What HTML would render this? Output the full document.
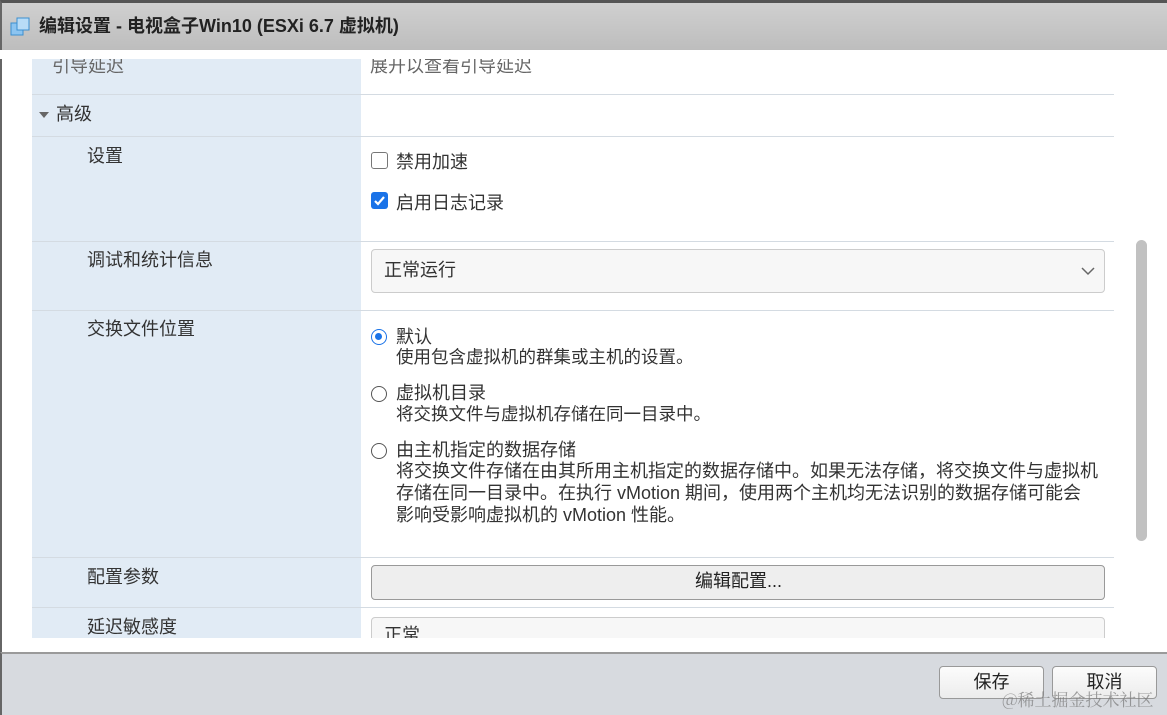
<!DOCTYPE html>
<html><head><meta charset="utf-8"><style>
*{margin:0;padding:0;box-sizing:border-box}
body{width:1167px;height:715px;overflow:hidden;background:#fff;font-family:"Liberation Sans","Noto Sans CJK SC",sans-serif;color:#333;font-size:18px;position:relative}
.abs{position:absolute}
#title{left:0;top:0;width:1167px;height:50px;background:linear-gradient(#d0d0d0,#bdbdbd);border-top:3px solid #555;border-left:2px solid #666}
#title span{position:absolute;left:37px;top:12px;font-weight:bold;font-size:18px;line-height:22px;color:#222}
.lc{left:32px;width:329px;background:#e1ebf5}
.hl{left:32px;width:1082px;height:1px;background:#d4dbe2}
.t{font-size:18px;line-height:22px;color:#333;white-space:nowrap}
.sel{left:371px;width:734px;border:1px solid #ccc;border-radius:4px;background:#f7f7f7}
.rad{width:16px;height:16px;border-radius:50%;border:1.5px solid #555;background:#fff}
.sub{font-size:17.5px;color:#333;line-height:22px;white-space:nowrap}
#foot{left:0;top:652px;width:1167px;height:63px;background:#d7dadf;border-top:2px solid #9a9a9a;border-left:2px solid #666}
.btn{top:666px;width:105px;height:33px;border:1px solid #999;border-radius:4px;background:linear-gradient(#fcfcfc,#ececec);text-align:center;line-height:31px;font-size:18px;color:#222}
</style></head><body>
<div class="abs" style="left:0;top:0;width:2px;height:715px;background:#666"></div>
<div id="title" class="abs">
<svg class="abs" style="left:8px;top:14px" width="22" height="22" viewBox="0 0 22 22"><rect x="1" y="6" width="12" height="12" fill="#8cc4f0" stroke="#3b8fd0"/><rect x="7" y="1" width="12" height="12" fill="#b8dcf7" stroke="#3b8fd0"/></svg>
<span>编辑设置 - 电视盒子Win10 (ESXi 6.7 虚拟机)</span></div>

<div class="abs lc" style="top:50px;height:588px"></div>
<div class="abs t" style="left:52px;top:55px;color:#666">引导延迟</div>
<div class="abs t" style="left:370px;top:55px;color:#666">展开以查看引导延迟</div>
<div class="abs" style="left:0;top:50px;width:1167px;height:9px;background:#fff"></div>
<div class="abs hl" style="top:94px"></div>
<div class="abs" style="left:39px;top:112px;width:0;height:0;border-left:5px solid transparent;border-right:5px solid transparent;border-top:6px solid #666"></div>
<div class="abs t" style="left:56px;top:103px">高级</div>
<div class="abs hl" style="top:136px"></div>
<div class="abs t" style="left:87px;top:145px">设置</div>
<div class="abs" style="left:371px;top:152px;width:17px;height:17px;border:1.5px solid #777;border-radius:3px;background:#fff"></div>
<div class="abs t" style="left:396px;top:151px">禁用加速</div>
<div class="abs" style="left:371px;top:192px;width:17px;height:17px;border-radius:3px;background:#1a73e8"><svg width="17" height="17"><path d="M4 9l3 3 6-7" stroke="#fff" stroke-width="2.2" fill="none"/></svg></div>
<div class="abs t" style="left:396px;top:192px">启用日志记录</div>
<div class="abs hl" style="top:241px"></div>
<div class="abs t" style="left:87px;top:249px">调试和统计信息</div>
<div class="abs sel" style="top:249px;height:44px"></div>
<div class="abs t" style="left:384px;top:259px">正常运行</div>
<svg class="abs" style="left:1081px;top:266px" width="14" height="10"><path d="M1 2l6 6 6-6" stroke="#666" stroke-width="1.5" fill="none"/></svg>
<div class="abs hl" style="top:310px"></div>
<div class="abs t" style="left:87px;top:318px">交换文件位置</div>
<div class="abs rad" style="left:371px;top:329px;border:1.5px solid #1a73e8"><div style="margin:3px;width:7px;height:7px;border-radius:50%;background:#1a73e8"></div></div>
<div class="abs t" style="left:396px;top:326px">默认</div>
<div class="abs sub" style="left:396px;top:346px">使用包含虚拟机的群集或主机的设置。</div>
<div class="abs rad" style="left:371px;top:386px"></div>
<div class="abs t" style="left:396px;top:382px">虚拟机目录</div>
<div class="abs sub" style="left:396px;top:403px">将交换文件与虚拟机存储在同一目录中。</div>
<div class="abs rad" style="left:371px;top:443px"></div>
<div class="abs t" style="left:396px;top:439px">由主机指定的数据存储</div>
<div class="abs sub" style="left:396px;top:460px;font-size:18px">将交换文件存储在由其所用主机指定的数据存储中。如果无法存储，将交换文件与虚拟机<br>存储在同一目录中。在执行 vMotion 期间，使用两个主机均无法识别的数据存储可能会<br>影响受影响虚拟机的 vMotion 性能。</div>
<div class="abs hl" style="top:557px"></div>
<div class="abs t" style="left:87px;top:566px">配置参数</div>
<div class="abs sel" style="top:565px;height:35px;background:#eee;border-color:#999"></div>
<div class="abs t" style="left:695px;top:570px;color:#222">编辑配置...</div>
<div class="abs hl" style="top:607px"></div>
<div class="abs t" style="left:87px;top:616px">延迟敏感度</div>
<div class="abs sel" style="top:617px;height:30px"></div>
<div class="abs t" style="left:384px;top:624px">正常</div>
<div class="abs" style="left:2px;top:638px;width:1165px;height:14px;background:#fff"></div>
<div class="abs" style="left:1136px;top:240px;width:11px;height:301px;border-radius:6px;background:#c1c1c1"></div>
<div id="foot" class="abs"></div>
<div class="abs btn" style="left:939px">保存</div>
<div class="abs btn" style="left:1052px">取消</div>
<div class="abs" style="left:1002px;top:686px;font-size:17px;color:rgba(120,120,120,.7);font-family:'Noto Serif CJK SC',serif">@稀土掘金技术社区</div>
</body></html>
